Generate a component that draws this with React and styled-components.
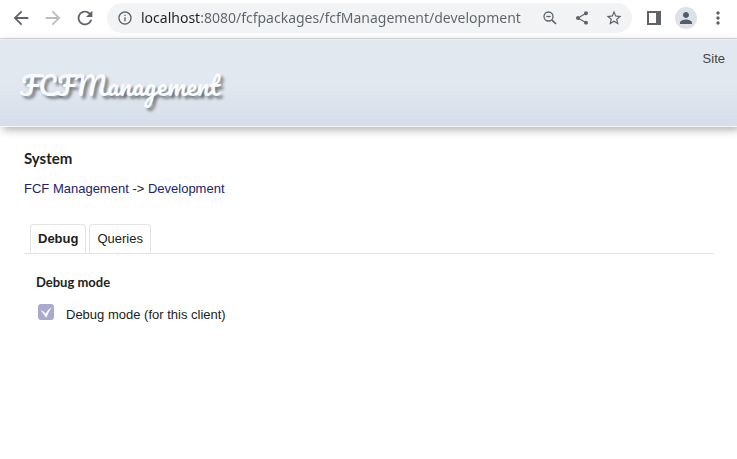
import React, { useState } from "react"
import styled, { createGlobalStyle } from "styled-components"
import {
  MdArrowBack,
  MdArrowForward,
  MdInfoOutline,
  MdMoreVert,
  MdPerson,
  MdRefresh,
  MdShare,
  MdStarBorder,
} from "react-icons/md"

const colors = {
  icon: "#5f6368",
  iconDisabled: "#babcbe",
  field: "#f1f3f4",
  text: "#222222",
  link: "#22226e",
  border: "#e4e4e4",
  check: "#aaaacf",
}

const GlobalStyle = createGlobalStyle`
  * {
    box-sizing: border-box;
  }

  body {
    margin: 0;
    background: #ffffff;
    color: ${colors.text};
    font-family: "Liberation Sans", Arial, sans-serif;
    font-size: 13px;
    line-height: 16px;
  }
`

const Toolbar = styled.div`
  display: flex;
  align-items: center;
  gap: 8px;
  padding: 3px 5px 5px 7px;
  border-bottom: 1px solid #dadcdf;
`

const IconGroup = styled.div`
  display: flex;
  flex-shrink: 0;
  gap: 4px;
`

const IconButton = styled.button`
  display: flex;
  flex-shrink: 0;
  align-items: center;
  justify-content: center;
  width: 28px;
  height: 28px;
  padding: 0;
  border: 0;
  background: none;
  color: ${colors.icon};

  &:disabled {
    color: ${colors.iconDisabled};
  }
`

const AddressBar = styled.div`
  display: flex;
  flex: 1;
  align-items: center;
  min-width: 0;
  height: 30px;
  padding: 0 4px;
  border-radius: 16px;
  background: ${colors.field};
`

const AddressInput = styled.input`
  flex: 1;
  min-width: 0;
  height: 24px;
  margin-left: 2px;
  padding: 0 0 1px;
  border: 0;
  outline: 0;
  background: linear-gradient(90deg, #202124 59px, ${colors.icon} 59px);
  background-clip: text;
  -webkit-text-fill-color: transparent;
  font-family: "Noto Sans", sans-serif;
  font-size: 14px;
`

const Avatar = styled.span`
  display: flex;
  align-items: center;
  justify-content: center;
  width: 22px;
  height: 22px;
  border-radius: 50%;
  background: #dee1e6;
  color: #525e70;
`

const Header = styled.header`
  display: flex;
  justify-content: space-between;
  align-items: flex-start;
  padding: 11px 12px 19px 20px;
  border-top: 1px solid #eceff2;
  border-bottom: 1px solid #f4f6f8;
  background: linear-gradient(#e1e8f0 50%, #d6dee9);
  box-shadow: 3px 3px 8px rgba(0, 0, 0, 0.3);
`

const Logo = styled.a`
  margin-top: 12px;
  color: #f8fcff;
  font-family: Pacifico, cursive;
  font-size: 26px;
  line-height: 44px;
  text-decoration: none;
  text-shadow: 3px 3px 3px rgba(0, 0, 0, 0.45);
`

const SiteLink = styled.a`
  color: #444444;
  text-decoration: none;
`

const Main = styled.main`
  padding: 23px 23px 24px 24px;
`

const Title = styled.h1`
  margin: 0 0 15px;
  font-family: Lato, sans-serif;
  font-size: 15px;
  line-height: 16px;
`

const Breadcrumbs = styled.nav`
  margin-bottom: 27px;
`

const Crumb = styled.a`
  color: ${colors.link};
  text-decoration: none;
`

const TabList = styled.div`
  display: flex;
  gap: 3px;
  padding-left: 6px;
  border-bottom: 1px solid ${colors.border};
`

const Tab = styled.button`
  height: 29px;
  padding: 0 7px 2px;
  border: 1px solid ${colors.border};
  border-bottom: 0;
  border-radius: 4px 4px 0 0;
  background: #ffffff;
  color: ${colors.text};
  font-family: inherit;
  font-size: 13px;
  font-weight: ${props => (props.$active ? 700 : 400)};
`

const Panel = styled.section`
  padding: 20px 12px;
`

const PanelTitle = styled.h2`
  margin: 0 0 14px;
  font-family: Lato, sans-serif;
  font-size: 13px;
  line-height: 16px;
`

const CheckLabel = styled.label`
  display: flex;
  gap: 12px;
  padding-left: 2px;
`

const CheckText = styled.span`
  padding-top: 3px;
`

const CheckBox = styled.span`
  position: relative;
  width: 16px;
  height: 16px;
`

const CheckInput = styled.input`
  appearance: none;
  display: block;
  width: 16px;
  height: 16px;
  margin: 0;
  border-radius: 3px;
  background: ${colors.check};
`

const CheckMark = styled.svg`
  position: absolute;
  inset: 0;
  pointer-events: none;
`

const tabs = ["Debug", "Queries"]

function ZoomOutIcon() {
  return (
    <svg width="14" height="14" viewBox="0 0 14 14" aria-hidden="true">
      <g fill="none" stroke="currentColor" strokeWidth="1.3">
        <circle cx="5.5" cy="5.5" r="4.5" />
        <path d="M3.3 5.5h4.4" />
        <path d="M8.8 8.8 13 13" strokeWidth="1.7" />
      </g>
    </svg>
  )
}

function SidePanelIcon() {
  return (
    <svg width="14" height="14" viewBox="0 0 14 14" aria-hidden="true">
      <path d="M0 0h14v14H0zM2 2v10h7V2z" fill="currentColor" fillRule="evenodd" />
    </svg>
  )
}

function BrowserToolbar() {
  return (
    <Toolbar>
      <IconGroup>
        <IconButton aria-label="Back">
          <MdArrowBack size={22} />
        </IconButton>
        <IconButton aria-label="Forward" disabled>
          <MdArrowForward size={22} />
        </IconButton>
        <IconButton aria-label="Reload">
          <MdRefresh size={22} />
        </IconButton>
      </IconGroup>
      <AddressBar>
        <IconButton aria-label="Site information">
          <MdInfoOutline size={16} />
        </IconButton>
        <AddressInput
          aria-label="Address"
          defaultValue="localhost:8080/fcfpackages/fcfManagement/development"
        />
        <IconGroup>
          <IconButton aria-label="Zoom">
            <ZoomOutIcon />
          </IconButton>
          <IconButton aria-label="Share">
            <MdShare size={16} />
          </IconButton>
          <IconButton aria-label="Bookmark">
            <MdStarBorder size={18} />
          </IconButton>
        </IconGroup>
      </AddressBar>
      <IconGroup>
        <IconButton aria-label="Side panel">
          <SidePanelIcon />
        </IconButton>
        <IconButton aria-label="Profile">
          <Avatar>
            <MdPerson size={18} />
          </Avatar>
        </IconButton>
        <IconButton aria-label="Menu">
          <MdMoreVert size={20} />
        </IconButton>
      </IconGroup>
    </Toolbar>
  )
}

function DebugCheck() {
  const [checked, setChecked] = useState(true)

  return (
    <CheckLabel>
      <CheckBox>
        <CheckInput
          type="checkbox"
          checked={checked}
          onChange={event => setChecked(event.target.checked)}
        />
        {checked && (
          <CheckMark width="16" height="16" viewBox="0 0 16 16">
            <path d="M2.5 6Q6 7 7.7 9.8 9.8 5.5 13.8 3 10.8 7.5 8.2 13.7 5.8 10 2.5 6z" fill="#ffffff" />
          </CheckMark>
        )}
      </CheckBox>
      <CheckText>Debug mode (for this client)</CheckText>
    </CheckLabel>
  )
}

export default function App() {
  const [active, setActive] = useState("Debug")

  return (
    <>
      <GlobalStyle />
      <BrowserToolbar />
      <Header>
        <Logo href="#home">FCFManagement</Logo>
        <SiteLink href="#site">Site</SiteLink>
      </Header>
      <Main>
        <Title>System</Title>
        <Breadcrumbs>
          <Crumb href="#management">FCF Management</Crumb>
          {" -> "}
          <Crumb href="#development">Development</Crumb>
        </Breadcrumbs>
        <TabList role="tablist">
          {tabs.map(tab => (
            <Tab
              key={tab}
              role="tab"
              aria-selected={tab === active}
              $active={tab === active}
              onClick={() => setActive(tab)}
            >
              {tab}
            </Tab>
          ))}
        </TabList>
        {active === "Debug" && (
          <Panel role="tabpanel">
            <PanelTitle>Debug mode</PanelTitle>
            <DebugCheck />
          </Panel>
        )}
      </Main>
    </>
  )
}
